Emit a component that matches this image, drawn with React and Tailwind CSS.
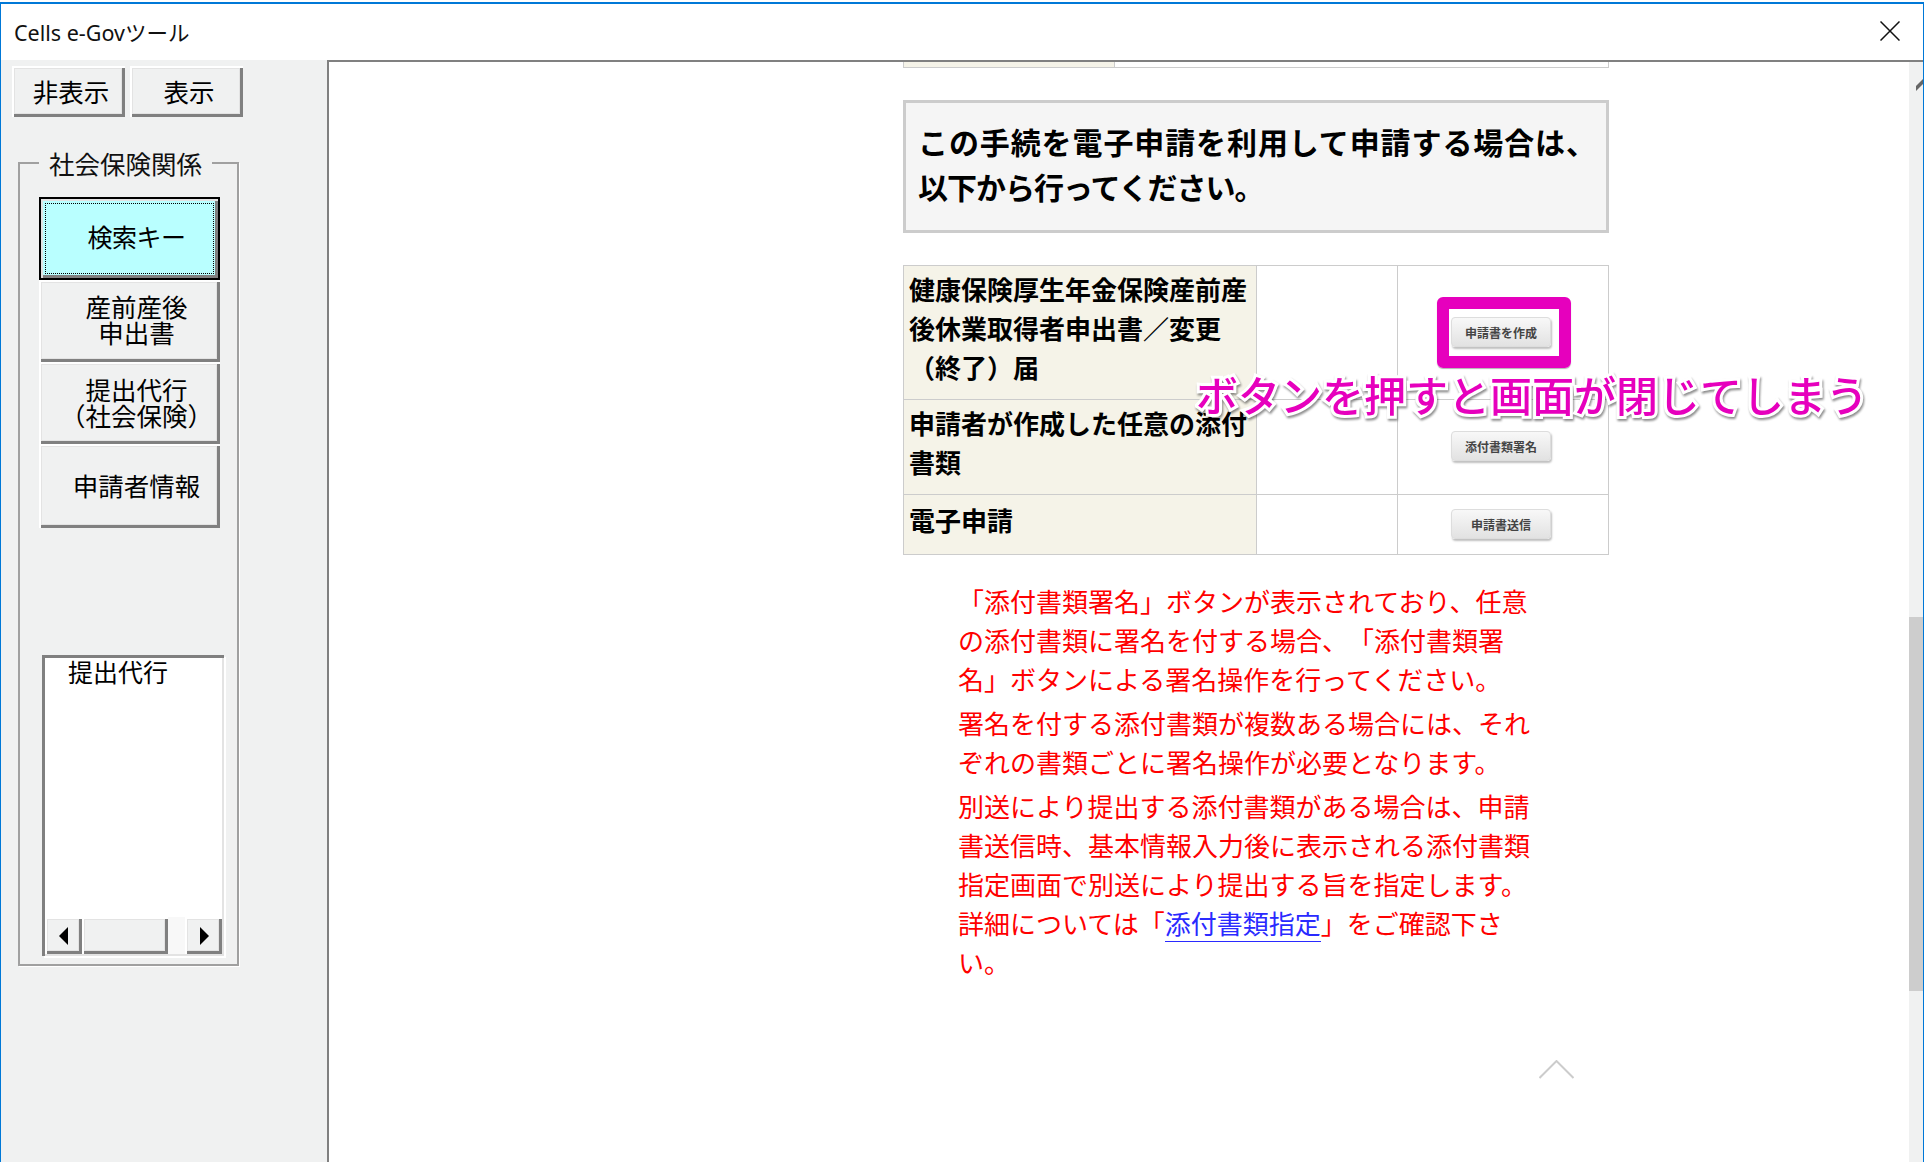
import React from "react";

const bevel =
    "shadow-[inset_2px_2px_0_#fff,inset_-3px_-3px_0_#808080,inset_3px_3px_0_#e3e3e3,inset_-4px_-4px_0_#e3e3e3]";

const SideButton = ({ className, children }) => (
    <button className={`flex items-center justify-center bg-[#f0f1f1] text-[25.5px] leading-[26px] text-black ${bevel} ${className}`}>
        {children}
    </button>
);

const FormButton = ({ children }) => (
    <div className="w-[100px] h-[30px] flex items-center justify-center rounded-[4px] border border-[#ddd] bg-gradient-to-b from-[#f8f8f8] to-[#e2e2e2] text-[12px] font-bold text-[#444] shadow-[1px_2px_2px_rgba(0,0,0,0.25)]">
        {children}
    </div>
);

const Triangle = ({ points }) => (
    <svg width="12" height="18" viewBox="0 0 12 18">
        <polygon points={points} fill="#000" />
    </svg>
);

const App = () => {
    return (
        <div className="h-screen w-full overflow-hidden bg-white pt-[2px] font-['Noto_Sans_CJK_JP','Noto_Sans',sans-serif] [text-spacing-trim:space-all] flex flex-col">
            <div className="flex flex-1 min-h-0 flex-col border-x border-t-2 border-[#0078d7]">
                {/* Title bar */}
                <div className="h-[56px] shrink-0 flex items-center justify-between pl-[13px] pr-[23px] bg-white">
                    <span className="mt-[2px] font-['Noto_Sans','Noto_Sans_CJK_JP',sans-serif] text-[21.5px] text-[#111]">
                        Cells e-Govツール
                    </span>
                    <svg className="mb-[2px]" width="20" height="20" viewBox="0 0 20 20">
                        <path d="M0.5 0.5 L19.5 19.5 M19.5 0.5 L0.5 19.5" stroke="#111" strokeWidth="1.5" fill="none" />
                    </svg>
                </div>

                <div className="flex flex-1 min-h-0">
                    {/* Left panel */}
                    <aside className="w-[326px] shrink-0 bg-[#f0f1f1] pl-[11px] pt-[6px]">
                        <div className="flex gap-[5px]">
                            <SideButton className="w-[113px] h-[51px]">
                                <span className="pl-[5px] pb-[2px]">非表示</span>
                            </SideButton>
                            <SideButton className="w-[113px] h-[51px]">
                                <span className="pl-[5px] pb-[2px]">表示</span>
                            </SideButton>
                        </div>

                        <fieldset className="mt-[33px] ml-[6px] w-[221px] h-[816px] border-2 border-[#a0a0a0] shadow-[1px_1px_0_#fff] pl-[19px]">
                            <legend className="px-[10px] text-[25.5px] leading-[26px] text-[#111]">社会保険関係</legend>

                            <div className="mt-[21px] flex flex-col w-[181px]">
                                <button className="h-[83px] flex items-center justify-center pl-[14px] pb-[3px] border-2 border-black bg-[#b9ffff] text-[25px] tracking-[-0.5px] text-black outline outline-1 outline-dotted outline-black outline-offset-[-7px] shadow-[inset_2px_2px_0_#e3e3e3,inset_-3px_-3px_0_#808080]">
                                    検索キー
                                </button>
                                <SideButton className="h-[82px] pl-[14px]">
                                    <span className="pb-[5px]">
                                        産前産後
                                        <br />
                                        申出書
                                    </span>
                                </SideButton>
                                <SideButton className="h-[82px] pl-[14px]">
                                    <span className="pb-[2px]">
                                        提出代行
                                        <br />
                                        （社会保険）
                                    </span>
                                </SideButton>
                                <SideButton className="h-[84px] pl-[14px]">
                                    <span className="pb-[3px]">申請者情報</span>
                                </SideButton>
                            </div>

                            {/* List box */}
                            <div className="mt-[127px] ml-[3px] w-[182px] h-[301px] flex flex-col bg-white border-t-[3px] border-l-[3px] border-[#808080] shadow-[inset_-2px_-2px_0_#e3e3e3,2px_2px_0_#fff]">
                                <div className="flex-1 pl-[23px] text-[25px] leading-[26px] text-black">提出代行</div>
                                <div className="h-[37px] mb-[2px] mr-[2px] flex">
                                    <div className={`w-[37px] flex items-center justify-center bg-[#f0f1f1] ${bevel}`}>
                                        <Triangle points="10,0 10,18 1,9" />
                                    </div>
                                    <div className={`w-[86px] bg-[#f0f1f1] ${bevel}`}></div>
                                    <div className="w-[17px] bg-[#f8f8f8]"></div>
                                    <div className={`w-[37px] flex items-center justify-center bg-[#f0f1f1] ${bevel}`}>
                                        <Triangle points="2,0 2,18 11,9" />
                                    </div>
                                </div>
                            </div>
                        </fieldset>
                    </aside>

                    {/* Browser panel */}
                    <main className="relative flex flex-1 min-w-0 bg-white border-l-2 border-t-2 border-[#808080]">
                        <div className="flex-1 pl-[574px]">
                            <div className="w-[706px] h-[6px] flex border-x border-b border-[#ccc]">
                                <div className="w-[211px] bg-[#f5f3e8] border-r border-[#ccc]"></div>
                            </div>

                            <div className="mt-[32px] w-[706px] h-[133px] flex items-center pl-[12px] pb-[6px] bg-[#f5f5f5] border-[3px] border-[#ccc] text-[30px] font-bold leading-[45px] text-black">
                                <p>
                                    <span className="tracking-[0.9px]">この手続を電子申請を利用して申請する場合は、</span>
                                    <br />
                                    <span className="tracking-[-1px]">以下から行ってください。</span>
                                </p>
                            </div>

                            <table className="mt-[32px] w-[705px] table-fixed border-collapse text-[26px] font-bold leading-[39px] text-black">
                                <colgroup>
                                    <col className="w-[353px]" />
                                    <col className="w-[141px]" />
                                    <col className="w-[211px]" />
                                </colgroup>
                                <tbody>
                                    <tr className="h-[134px]">
                                        <td className="border border-[#ccc] bg-[#f5f3e8] align-top pt-[3px] pl-[5px]">
                                            健康保険厚生年金保険産前産後休業取得者申出書／変更（終了）届
                                        </td>
                                        <td className="border border-[#ccc]"></td>
                                        <td className="border border-[#ccc] align-top pt-[51px] pl-[53px]">
                                            <div className="relative w-[100px]">
                                                <FormButton>申請書を作成</FormButton>
                                                <div className="absolute -left-[14px] -right-[20px] -top-[20px] -bottom-[21px] border-[12px] border-[#e600bd] rounded-[6px] shadow-[0_1px_1px_rgba(0,0,0,0.3)]"></div>
                                            </div>
                                        </td>
                                    </tr>
                                    <tr className="h-[95px]">
                                        <td className="border border-[#ccc] bg-[#f5f3e8] align-top pt-[3px] pl-[5px]">
                                            申請者が作成した任意の添付書類
                                        </td>
                                        <td className="border border-[#ccc]"></td>
                                        <td className="border border-[#ccc] align-top pt-[31px] pl-[53px]">
                                            <FormButton>添付書類署名</FormButton>
                                        </td>
                                    </tr>
                                    <tr className="h-[60px]">
                                        <td className="border border-[#ccc] bg-[#f5f3e8] align-top pt-[5px] pl-[5px]">電子申請</td>
                                        <td className="border border-[#ccc]"></td>
                                        <td className="border border-[#ccc] align-top pt-[14px] pl-[53px]">
                                            <FormButton>申請書送信</FormButton>
                                        </td>
                                    </tr>
                                </tbody>
                            </table>

                            <div className="mt-[26px] ml-[55px] w-[574px] text-[26px] leading-[39px] text-[#ff0000]">
                                <p>「添付書類署名」ボタンが表示されており、任意の添付書類に署名を付する場合、「添付書類署名」ボタンによる署名操作を行ってください。</p>
                                <p className="mt-[5px]">署名を付する添付書類が複数ある場合には、それぞれの書類ごとに署名操作が必要となります。</p>
                                <p className="mt-[5px]">
                                    別送により提出する添付書類がある場合は、申請書送信時、基本情報入力後に表示される添付書類指定画面で別送により提出する旨を指定します。詳細については「
                                    <a className="text-[#2a2aff] border-b border-[#2a2aff]">添付書類指定</a>
                                    」をご確認下さい。
                                </p>
                            </div>
                        </div>

                        {/* Scroll bar */}
                        <div className="relative w-[14px] shrink-0 bg-[#f0f1f1]">
                            <svg className="absolute left-[7px] top-[17px]" width="7" height="12" viewBox="0 0 7 12">
                                <path d="M0 12 L0 7 L7 0 L7 5 Z" fill="#666" />
                            </svg>
                            <div className="mt-[555px] h-[374px] bg-[#cdcdcd]"></div>
                        </div>

                        {/* Page top mark */}
                        <svg className="absolute left-[1210px] top-[998px]" width="35" height="19" viewBox="0 0 35 19">
                            <path d="M0.5 18 L17.5 1 L34.5 18" stroke="#ccc" strokeWidth="2" fill="none" />
                        </svg>

                        {/* Annotation */}
                        <div className="absolute left-[867px] top-[302px] whitespace-nowrap font-medium text-[42px] leading-[60px] text-[#e600bd] [-webkit-text-stroke:6px_white] [paint-order:stroke_fill] drop-shadow-[1px_2px_1px_rgba(0,0,0,0.45)]">
                            ボタンを押すと画面が閉じてしまう
                        </div>
                    </main>
                </div>
            </div>
        </div>
    );
};

export default App;
